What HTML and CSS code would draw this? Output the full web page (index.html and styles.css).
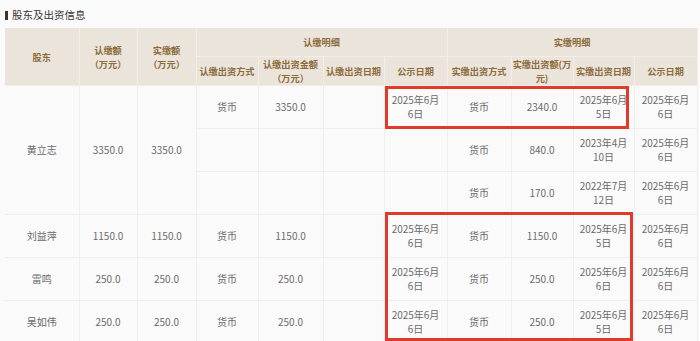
FILE: index.html
```html
<!DOCTYPE html>
<html lang="zh-CN">

<head>
    <meta charset="UTF-8">
    <title>股东及出资信息</title>
    <link rel="stylesheet" href="styles.css">
</head>

<body>
    <h3 class="title">股东及出资信息</h3>
    <div class="wrap">
        <table class="holders">
            <colgroup>
                <col style="width:74px">
                <col style="width:58px">
                <col style="width:59px">
                <col style="width:62px">
                <col style="width:65px">
                <col style="width:61px">
                <col style="width:63px">
                <col style="width:64px">
                <col style="width:62px">
                <col style="width:61px">
                <col style="width:63px">
            </colgroup>
            <thead>
                <tr class="h1">
                    <th rowspan="2">股东</th>
                    <th rowspan="2">认缴额<br>（万元）</th>
                    <th rowspan="2">实缴额<br>（万元）</th>
                    <th colspan="4">认缴明细</th>
                    <th colspan="4">实缴明细</th>
                </tr>
                <tr class="h2">
                    <th>认缴出资方式</th>
                    <th>认缴出资金额<br>（万元）</th>
                    <th>认缴出资日期</th>
                    <th>公示日期</th>
                    <th>实缴出资方式</th>
                    <th>实缴出资额(万元)</th>
                    <th>实缴出资日期</th>
                    <th>公示日期</th>
                </tr>
            </thead>
            <tbody>
                <tr>
                    <td rowspan="3">黄立志</td>
                    <td rowspan="3">3350.0</td>
                    <td rowspan="3">3350.0</td>
                    <td>货币</td>
                    <td>3350.0</td>
                    <td></td>
                    <td>2025年6月6日</td>
                    <td>货币</td>
                    <td>2340.0</td>
                    <td>2025年6月5日</td>
                    <td>2025年6月6日</td>
                </tr>
                <tr>
                    <td></td>
                    <td></td>
                    <td></td>
                    <td></td>
                    <td>货币</td>
                    <td>840.0</td>
                    <td>2023年4月10日</td>
                    <td>2025年6月6日</td>
                </tr>
                <tr>
                    <td></td>
                    <td></td>
                    <td></td>
                    <td></td>
                    <td>货币</td>
                    <td>170.0</td>
                    <td>2022年7月12日</td>
                    <td>2025年6月6日</td>
                </tr>
                <tr>
                    <td>刘益萍</td>
                    <td>1150.0</td>
                    <td>1150.0</td>
                    <td>货币</td>
                    <td>1150.0</td>
                    <td></td>
                    <td>2025年6月6日</td>
                    <td>货币</td>
                    <td>1150.0</td>
                    <td>2025年6月5日</td>
                    <td>2025年6月6日</td>
                </tr>
                <tr>
                    <td>雷鸣</td>
                    <td>250.0</td>
                    <td>250.0</td>
                    <td>货币</td>
                    <td>250.0</td>
                    <td></td>
                    <td>2025年6月6日</td>
                    <td>货币</td>
                    <td>250.0</td>
                    <td>2025年6月6日</td>
                    <td>2025年6月6日</td>
                </tr>
                <tr>
                    <td>吴如伟</td>
                    <td>250.0</td>
                    <td>250.0</td>
                    <td>货币</td>
                    <td>250.0</td>
                    <td></td>
                    <td>2025年6月6日</td>
                    <td>货币</td>
                    <td>250.0</td>
                    <td>2025年6月5日</td>
                    <td>2025年6月6日</td>
                </tr>
            </tbody>
        </table>
        <!-- 标注框 -->
        <div class="mark mark-a"></div>
        <div class="mark mark-b"></div>
    </div>
</body>

</html>
```

FILE: styles.css
```css
* {
    margin: 0;
    padding: 0;
}

body {
    background: #fafafa;
    padding: 8px 3px 0 5px;
    font-family: "Noto Sans CJK SC", "Noto Sans", sans-serif;
    color: #6b6b6b;
}

.title {
    height: 20px;
    line-height: 14px;
    font-size: 10.5px;
    font-weight: normal;
    color: #333;
    display: flex;
    align-items: flex-start;
}

.title::before {
    content: "";
    width: 3px;
    height: 9px;
    margin: 3px 4px 0 0;
    background: #3e3226;
}

.wrap {
    position: relative;
    width: 692px;
}

.holders {
    width: 692px;
    table-layout: fixed;
    border-collapse: collapse;
    font-size: 10px;
    text-align: center;
}

.holders th {
    background: #ebe4da;
    color: #8c6b3c;
    font-size: 9.2px;
    font-weight: bold;
    line-height: 14px;
    border: 1px solid #f2ede6;
    padding: 0;
}

.holders .h1 th {
    height: 28px;
}

.holders .h2 th {
    height: 27px;
}

.holders thead tr:first-child th {
    border-top: none;
}

.holders td {
    height: 42px;
    line-height: 14px;
    padding: 0 6px;
    border: 1px solid #efefef;
    background: #fafafa;
}

.holders th:first-child,
.holders tbody tr td:first-child {
    border-left: none;
}

.mark {
    position: absolute;
    border: 3px solid #e03a2a;
}

.mark-a {
    left: 380px;
    top: 58px;
    width: 238px;
    height: 37px;
}

.mark-b {
    left: 380px;
    top: 184px;
    width: 242px;
    height: 123px;
}
```
